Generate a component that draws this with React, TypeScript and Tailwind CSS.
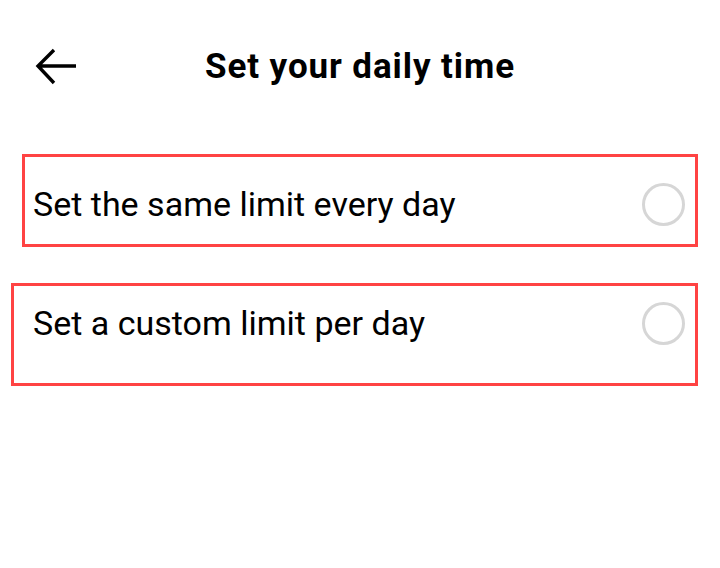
import React from "react";

function Radio() {
  return (
    <span className="block h-[43px] w-[43px] shrink-0 rounded-full border-[3px] border-[#d6d6d6]" />
  );
}

export default function App() {
  return (
    <div className="h-[568px] w-[720px] bg-white text-black" style={{ fontFamily: "Roboto, 'Noto Sans', sans-serif" }}>
      <header className="relative flex h-[154px] items-start justify-center pt-[44px]">
        <button type="button" className="absolute left-[34px] top-[47px] p-0">
          <svg width="46" height="40" viewBox="0 0 46 40" fill="none">
            <path d="M42 19H5M20 3L4 19L20 36" stroke="#000" strokeWidth="3.4" strokeLinecap="butt" strokeLinejoin="miter" />
          </svg>
        </button>
        <h1 className="text-[35px] font-bold leading-[46px] tracking-[0.9px]">Set your daily time</h1>
      </header>

      <div className="ml-[22px] mr-[22px] border-[3px] border-[#ff4343] pb-[12px] pl-[8px] pr-[10px] pt-[19px]">
        <div className="flex h-14 items-center justify-between">
          <span className="text-[34px] leading-none">Set the same limit every day</span>
          <Radio />
        </div>
      </div>

      <div className="ml-[11px] mr-[22px] mt-[36px] border-[3px] border-[#ff4343] pb-[32px] pl-[19px] pr-[10px] pt-[9px]">
        <div className="flex h-14 items-center justify-between">
          <span className="text-[34px] leading-none">Set a custom limit per day</span>
          <Radio />
        </div>
      </div>
    </div>
  );
}
